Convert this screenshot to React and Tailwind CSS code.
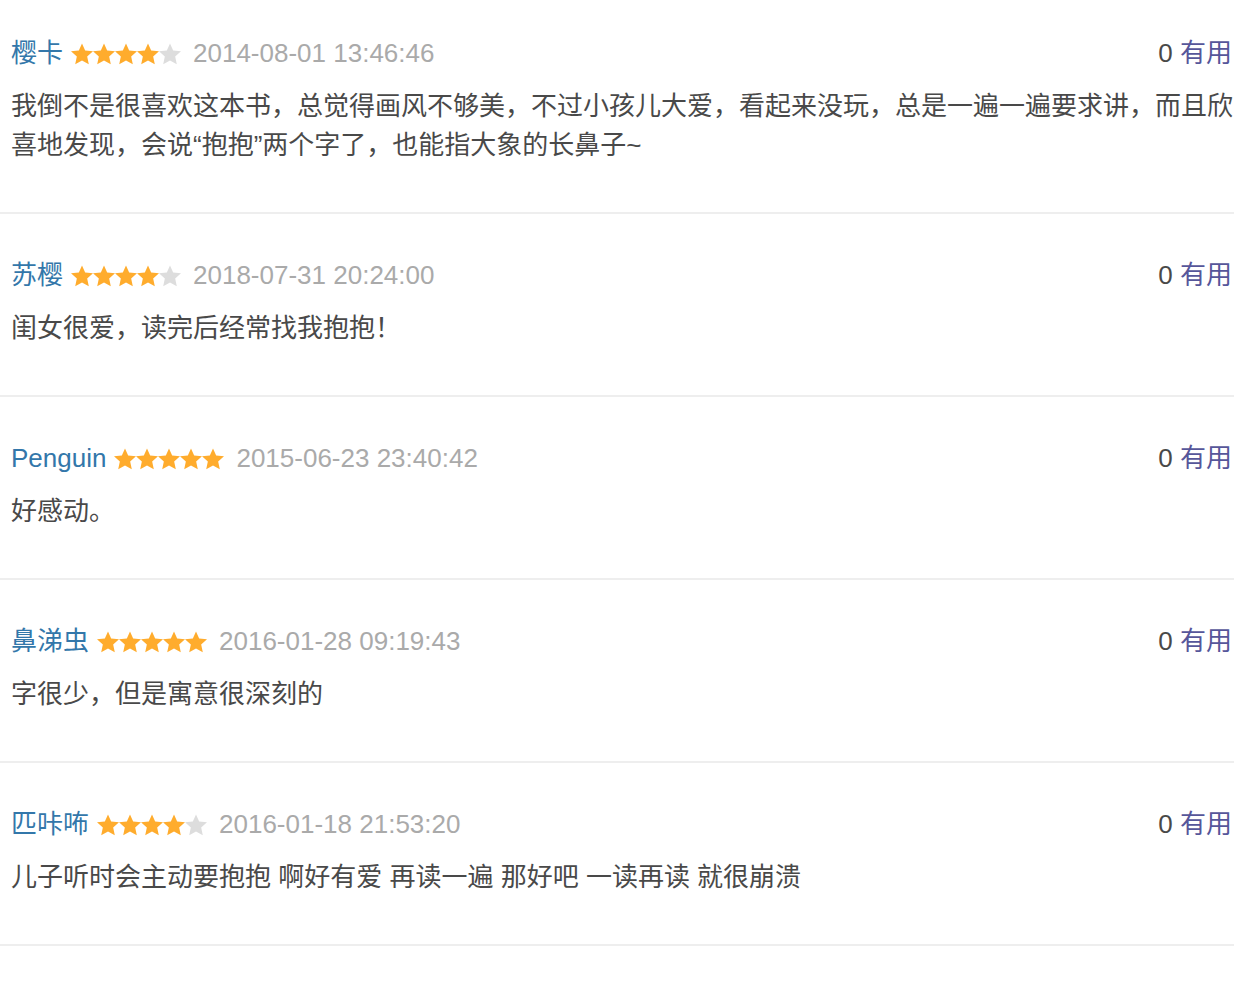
const reviews = [
  {
    name: '樱卡',
    stars: 4,
    time: '2014-08-01 13:46:46',
    text: '我倒不是很喜欢这本书，总觉得画风不够美，不过小孩儿大爱，看起来没玩，总是一遍一遍要求讲，而且欣喜地发现，会说“抱抱”两个字了，也能指大象的长鼻子~',
  },
  { name: '苏樱', stars: 4, time: '2018-07-31 20:24:00', text: '闺女很爱，读完后经常找我抱抱！' },
  { name: 'Penguin', stars: 5, time: '2015-06-23 23:40:42', text: '好感动。' },
  { name: '鼻涕虫', stars: 5, time: '2016-01-28 09:19:43', text: '字很少，但是寓意很深刻的' },
  {
    name: '匹咔咘',
    stars: 4,
    time: '2016-01-18 21:53:20',
    text: '儿子听时会主动要抱抱 啊好有爱 再读一遍 那好吧 一读再读 就很崩溃',
  },
]

function Star({ on }) {
  return (
    <svg width="22" height="22" viewBox="0.5 1 23 22" className="shrink-0">
      <polygon
        points="12,1 15.3,8.3 23.5,9.2 17.4,14.7 19.1,22.8 12,18.7 4.9,22.8 6.6,14.7 0.5,9.2 8.7,8.3"
        fill={on ? '#ffac2d' : '#dddddd'}
      />
    </svg>
  )
}

export default function App() {
  return (
    <div
      className="min-h-screen bg-white"
      style={{ fontFamily: '"Liberation Sans", Arial, "Noto Sans CJK SC", sans-serif' }}
    >
      <div className="w-[1234px]">
        {reviews.map((r, i) => (
          <div
            key={r.time}
            className={`border-b-2 border-[#eeeeee] pl-[11px] pr-[2px] pb-[47px] ${i === 0 ? 'pt-[34px]' : 'pt-[42px]'}`}
          >
            <div className="flex h-[39px] items-center justify-between text-[26px]">
              <div className="flex items-center">
                <span className="text-[#3377aa]">{r.name}</span>
                <span className="ml-[8px] flex">
                  {[0, 1, 2, 3, 4].map((s) => (
                    <Star key={s} on={s < r.stars} />
                  ))}
                </span>
                <span className="ml-[12px] text-[#aaaaaa]">{r.time}</span>
              </div>
              <div>
                <span className="text-[#494949]">0</span>{' '}
                <span className="text-[#56569a]">有用</span>
              </div>
            </div>
            <p className="mt-[14px] mr-[-6px] text-[26px] leading-[39px] text-[#494949]">{r.text}</p>
          </div>
        ))}
      </div>
    </div>
  )
}
